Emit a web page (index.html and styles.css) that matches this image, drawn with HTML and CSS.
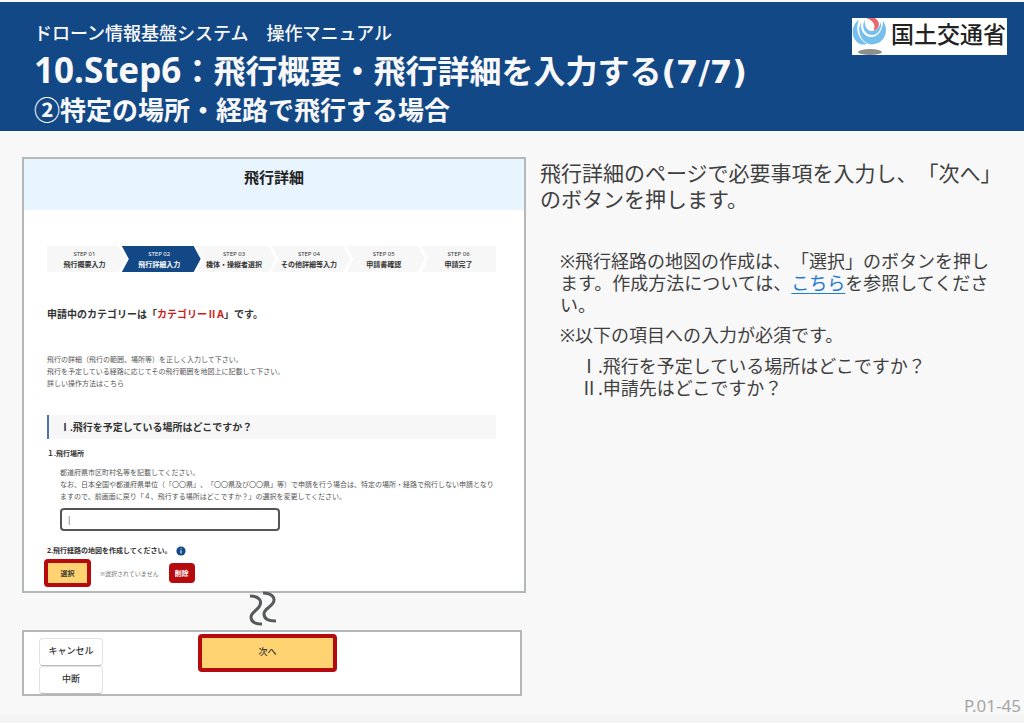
FILE: index.html
```html
<!DOCTYPE html>
<html lang="ja">
<head>
<meta charset="utf-8">
<meta name="viewport" content="width=device-width, initial-scale=1">
<title>ドローン情報基盤システム 操作マニュアル</title>
<link rel="stylesheet" href="styles.css">
</head>
<body>
<div class="page">
  <header class="banner">
    <div class="banner-text">
      <p class="manual">ドローン情報基盤システム　操作マニュアル</p>
      <h1 class="title"><span class="latin">10.Step6</span>：飛行概要・飛行詳細を入力する<span class="count">(7/7)</span></h1>
      <p class="subtitle">②特定の場所・経路で飛行する場合</p>
    </div>
    <div class="logo">
      <svg class="logo-mark" width="36" height="37" viewBox="0 0 36 37" aria-hidden="true">
        <ellipse cx="18" cy="34" rx="12" ry="3" fill="#8d8f8e"/>
        <path d="M7 2C-1 7-1 19 5 24c3 3 7 3 10 2C6 21 3 11 7 2z" fill="#74bfec"/>
        <path d="M9 4C5 12 8 23 17 26c8 2 17-4 17-14 0-3-1-6-3-9 0 9-5 16-12 16C12 19 8 12 9 4z" fill="#74bfec"/>
        <path d="M13 2C9 8 12 17 20 17c6 0 10-6 9-13-2 6-5 9-9 9-5 0-8-5-7-11z" fill="#74bfec"/>
        <path d="M14 0h9c6 4 5 11-2 13 1-1 1-1 1-2 2-5-2-9-8-11z" fill="#e8656f"/>
      </svg>
      <span class="logo-name">国土交通省</span>
    </div>
  </header>

  <main class="content">
    <div class="screens">
      <section class="panel form-panel">
        <h2 class="panel-title">飛行詳細</h2>
        <div class="panel-body">
          <ol class="steps">
            <li class="step first"><span>STEP 01</span><b>飛行概要入力</b></li>
            <li class="step active"><span>STEP 02</span><b>飛行詳細入力</b></li>
            <li class="step"><span>STEP 03</span><b>機体・操縦者選択</b></li>
            <li class="step"><span>STEP 04</span><b>その他詳細等入力</b></li>
            <li class="step"><span>STEP 05</span><b>申請書確認</b></li>
            <li class="step last"><span>STEP 06</span><b>申請完了</b></li>
          </ol>
          <p class="category">申請中のカテゴリーは「<em>カテゴリーⅡA</em>」です。</p>
          <p class="small intro">飛行の詳細（飛行の範囲、場所等）を正しく入力して下さい。<br>飛行を予定している経路に応じてその飛行範囲を地図上に記載して下さい。<br>詳しい操作方法はこちら</p>
          <h3 class="section-title">Ⅰ.飛行を予定している場所はどこですか？</h3>
          <label class="item-label" for="place">１.飛行場所</label>
          <div class="place">
            <p class="small">都道府県市区町村名等を記載してください。<br>なお、日本全国や都道府県単位（「〇〇県」、「〇〇県及び〇〇県」等）で申請を行う場合は、特定の場所・経路で飛行しない申請となり<br>ますので、前画面に戻り「４、飛行する場所はどこですか？」の選択を変更してください。</p>
            <input class="place-input" id="place" type="text" value="|">
          </div>
          <p class="item-label route">2.飛行経路の地図を作成してください。
            <svg width="10" height="10" viewBox="0 0 10 10" aria-hidden="true"><circle cx="5" cy="5" r="4.6" fill="#134886"/><path d="M5 2.2v1M5 4.2v3.4" stroke="#fff" stroke-width="1"/></svg>
          </p>
          <div class="route-row">
            <button class="primary pick" type="button">選択</button>
            <span class="unset">※選択されていません</span>
            <button class="delete" type="button">削除</button>
          </div>
        </div>
      </section>

      <svg class="omission" width="28" height="35" viewBox="0 0 28 35" aria-hidden="true">
        <path d="M1 5C10 5 14 10 10 16C6 21 2 22 2 26C2 31 7 33 13 33M14 2C23 2 27 7 24 12C21 17 15 18 15 23C15 28 20 30 27 30" fill="none" stroke="#58595a" stroke-width="3"/>
      </svg>

      <section class="panel actions">
        <div class="side-buttons">
          <button class="plain" type="button">キャンセル</button>
          <button class="plain" type="button">中断</button>
        </div>
        <button class="primary next" type="button">次へ</button>
      </section>
    </div>

    <div class="guide">
      <p class="lead">飛行詳細のページで必要事項を入力し、「次へ」<br>のボタンを押します。</p>
      <div class="notes">
        <p>※飛行経路の地図の作成は、「選択」のボタンを押し<br>ます。作成方法については、<a href="#place">こちら</a>を参照してくださ<br>い。</p>
        <p>※以下の項目への入力が必須です。</p>
        <ul class="required">
          <li>Ⅰ.飛行を予定している場所はどこですか？</li>
          <li>Ⅱ.申請先はどこですか？</li>
        </ul>
      </div>
    </div>
  </main>
  <footer class="page-number">P.01-45</footer>
</div>
</body>
</html>
```

FILE: styles.css
```css
* { box-sizing: border-box; }

body {
  margin: 0;
  background: #f8f8f8;
  color: #404040;
  font-family: "Noto Sans", "Noto Sans CJK JP", sans-serif;
  text-spacing-trim: space-all;
}

p, h1, h2, h3, ol, ul { margin: 0; padding: 0; list-style: none; }
button, input { font-family: inherit; }

.page {
  display: flex;
  flex-direction: column;
  min-height: 100vh;
}

/* Banner */
.banner {
  display: flex;
  justify-content: space-between;
  align-items: flex-start;
  margin-top: 2px;
  padding: 16px 17px 5px 34px;
  background: #134886;
  color: #f8f8f8;
}
.manual { font-size: 18px; line-height: 30px; font-weight: 500; }
.title { font-size: 32px; line-height: 46px; font-weight: 700; white-space: nowrap; }
.latin { font-size: 35px; line-height: 32px; }
.count { font-family: "DejaVu Sans", sans-serif; line-height: 32px; }
.subtitle { font-size: 26px; line-height: 32px; font-weight: 700; }
.logo {
  display: flex;
  align-items: flex-start;
  gap: 3px;
  width: 155px;
  height: 37px;
  background: #fff;
}
.logo-mark { flex: none; }
.logo-name { color: #222; font-size: 23px; line-height: 32px; font-weight: 500; white-space: nowrap; }

/* Two-column content */
.content {
  display: grid;
  grid-template-columns: minmax(0, 504fr) minmax(0, 484fr);
  gap: 14px;
  flex: 1;
  padding: 26px 0 0 22px;
}
.screens { display: flex; flex-direction: column; }
.panel { background: #fff; border: 2px solid #b4b8b8; color: #333; }

.panel-title {
  height: 51px;
  background: #e8f5fe;
  color: #222;
  font-size: 15px;
  line-height: 36px;
  font-weight: 700;
  text-align: center;
}
.panel-body { padding: 36px 28px 4px 23px; }

/* Step indicator */
.steps { display: grid; grid-template-columns: repeat(6, 1fr); }
.step {
  display: flex;
  flex-direction: column;
  align-items: center;
  margin-right: -4px;
  padding: 3px 4px 2px 0;
  background: #f7f7f7;
  clip-path: polygon(0 0, calc(100% - 7px) 0, 100% 50%, calc(100% - 7px) 100%, 0 100%, 7px 50%);
}
.step.first { clip-path: polygon(0 0, calc(100% - 7px) 0, 100% 50%, calc(100% - 7px) 100%, 0 100%); }
.step.last { margin-right: 0; padding-right: 0; clip-path: polygon(0 0, 100% 0, 100% 100%, 0 100%, 7px 50%); }
.step span { font-size: 6px; line-height: 10px; }
.step b { font-size: 7px; line-height: 11px; font-weight: 700; white-space: nowrap; }
.step.active { background: #134886; color: #fff; }

.category { margin-top: 32px; font-size: 10px; line-height: 20px; font-weight: 700; white-space: nowrap; }
.category em { color: #c81e1e; font-style: normal; }

.small { color: #555; font-size: 7px; line-height: 12px; white-space: nowrap; }
.intro { margin-top: 30px; }

.section-title {
  margin-top: 25px;
  padding-left: 11px;
  border-left: 2px solid #4a74ae;
  background: #f7f7f7;
  font-size: 10px;
  line-height: 24px;
  font-weight: 700;
}
.item-label { display: block; margin-top: 9px; font-size: 7px; line-height: 12px; font-weight: 700; }
.place { margin-top: 7px; padding-left: 13px; }
.place-input {
  display: block;
  width: 220px;
  height: 23px;
  margin-top: 5px;
  padding: 0 5px;
  border: 2px solid #555;
  border-radius: 4px;
  background: #fff;
  color: #555;
  font-size: 8px;
}
.route { display: flex; align-items: center; gap: 4px; margin-top: 14px; }
.route-row { display: flex; align-items: center; margin: 2px 0 0 -3px; }

button { padding: 0; border: 0; color: #333; }
.primary { border: 4px solid #b50a0e; border-radius: 4px; background: #ffd272; }
.pick { width: 47px; height: 28px; font-size: 7px; font-weight: 700; }
.unset { margin-left: 9px; color: #777; font-size: 6px; }
.delete {
  width: 26px;
  height: 20px;
  margin-left: 10px;
  border-radius: 4px;
  background: #b50a0e;
  color: #fff;
  font-size: 7px;
  font-weight: 700;
}

.omission { margin: -2px 0 4px 227px; }

/* Bottom buttons */
.actions {
  display: flex;
  align-items: flex-start;
  gap: 95px;
  margin-right: 4px;
  padding: 2px 0 0 15px;
}
.side-buttons { display: flex; flex-direction: column; padding-top: 4px; }
.plain {
  width: 64px;
  height: 28px;
  border: 1px solid #e2e2e2;
  border-bottom-color: #bbb;
  border-radius: 4px;
  background: #fff;
  font-size: 9px;
  line-height: 22px;
  padding-bottom: 3px;
  font-weight: 500;
}
.next { width: 139px; height: 38px; padding-bottom: 3px; font-size: 9px; font-weight: 500; }

/* Instructions */
.guide { padding: 3px 0 0 0; white-space: nowrap; }
.lead { font-size: 21px; line-height: 26px; }
.notes { padding: 38px 0 0 20px; font-size: 18px; line-height: 22px; }
.notes p + p { margin-top: 8px; }
.notes a { color: #1f7ad6; text-underline-offset: 3px; }
.required { margin: 9px 0 0 20px; }

.page-number {
  padding-right: 3px;
  color: #a6a6a6;
  font-size: 17px;
  line-height: 20px;
  text-align: right;
  padding-bottom: 9px;
  background: linear-gradient(to top, #fff 2px, #f4f4f4 2px, #f4f4f4 11px, transparent 11px);
}
```
